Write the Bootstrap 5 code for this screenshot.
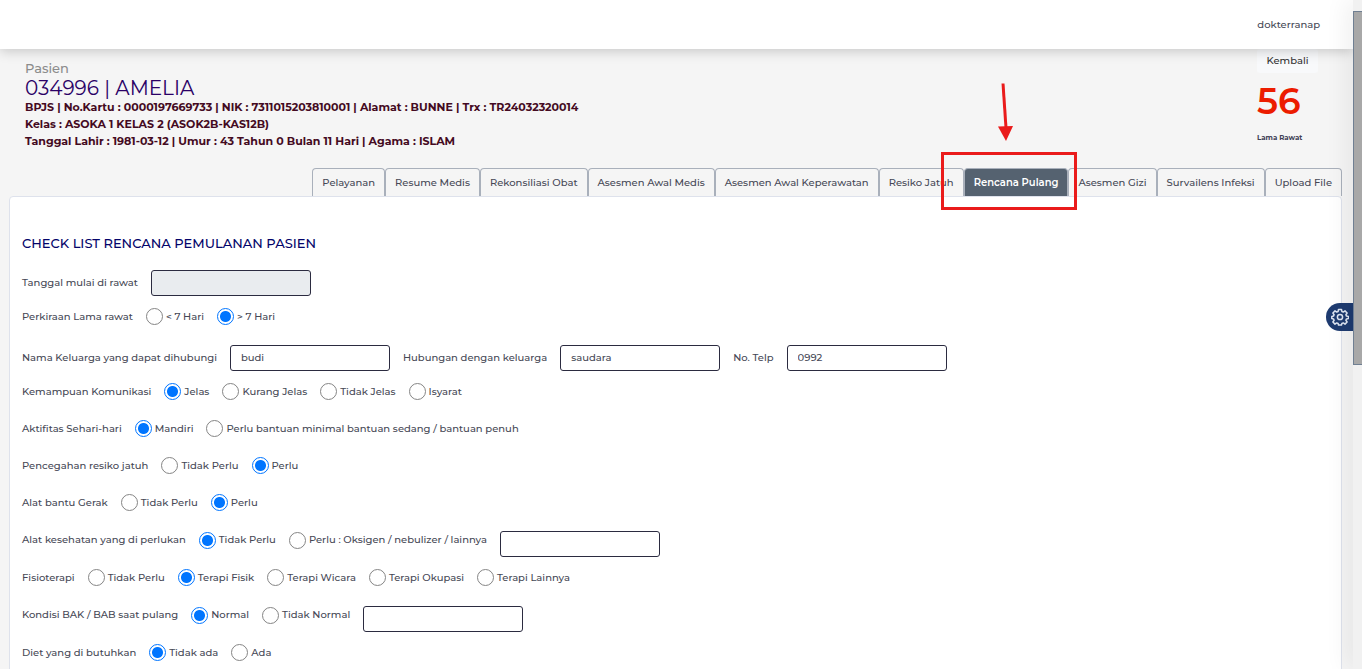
<!DOCTYPE html>
<html lang="id">
<head>
<meta charset="utf-8">
<meta name="viewport" content="width=device-width, initial-scale=1">
<title>Rencana Pulang</title>
<link href="https://cdn.jsdelivr.net/npm/bootstrap@5.3.0/dist/css/bootstrap.min.css" rel="stylesheet">
<style>
  body { font-family: Montserrat, Inter, "Noto Sans", sans-serif; font-size: 10px; font-weight: 500; line-height: 16px; color: #464855; background: #f5f5f5; }
  a { color: inherit; text-decoration: none; }
  .page { padding-right: 9px; }
  .topbar { height: 49px; box-shadow: 0 2px 12px rgba(0,0,0,.2); padding-right: 33px; position: relative; z-index: 2; }
  .patient { padding: 0 36px 0 25px; height: 119px; }
  .identity { padding-top: 11px; }
  .caption-text { font-size: 13px; line-height: 17px; font-weight: 500; color: #8c8c8c; }
  .patient h1 { font-size: 20px; line-height: 22px; font-weight: 400; color: #2a0066; margin: 0; }
  .patient p { font-size: 11px; line-height: 17px; font-weight: 700; color: #440a22; margin: 0; }
  .stay { width: 60px; }
  .btn-back { font-size: 10px; font-weight: 500; line-height: 16px; padding: 4px 0; background: #f8f9fb; color: #333; border: 0; border-radius: 3px; width: 61px; }
  .stay-count { font-size: 36px; line-height: 44px; font-weight: 600; color: #ec1c00; margin-top: 6px; }
  .stay-label { font-size: 7px; line-height: 16px; font-weight: 700; color: #404055; margin-top: 7px; white-space: nowrap; }
  .tabs { margin-right: 11px; }
  .tabs .nav-link { height: 28px; padding: 6px 9px; border: 1px solid #a9b0bb; border-bottom: 0; border-radius: 4px 4px 0 0; color: #464855; white-space: nowrap; }
  .tabs .nav-link.active { background: #556270; color: #fff; font-weight: 600; }
  .marker { position: absolute; z-index: 3; top: -16px; bottom: -14px; left: -23px; right: -9px; border: 3px solid #ea1b1b; }
  .marker-arrow { position: absolute; z-index: 3; bottom: 54px; left: 31px; }
  .panel { margin: 0 11px 0 9px; padding: 36px 12px 0; background: #fff; border: 1px solid #dee2ec; border-radius: 4px; height: 800px; }
  .panel h2 { font-size: 13px; line-height: 20px; font-weight: 500; color: #04046a; margin: 0 0 15px; }
  .line { height: 37px; gap: 13px; }
  .line-first { height: 30px; }
  .line-family { height: 31px; margin-top: 7px; }
  .line-extra { height: 38px; }
  .box { width: 160px; height: 26px; padding: 2px 10px; border: 1px solid #2b2b40; border-radius: 3px; font-size: 10px; font-weight: 500; color: #464855; }
  .box:disabled { background: #e9ecef; }
  .line-extra .box { align-self: flex-end; margin-bottom: 2px; }
  .choice { gap: 3px; }
  .choice input { appearance: none; width: 17px; height: 17px; margin: 0; border: 1px solid #858585; border-radius: 50%; background: #fff; }
  .choice input:checked { border-color: #0075ff; background: radial-gradient(circle, #0075ff 5px, #fff 6px); }
  .edge { position: fixed; z-index: 4; top: 0; bottom: 0; right: 0; width: 9px; background: #f1f1f1; box-shadow: 0 0 26px rgba(0,0,0,.16); }
  .thumb { position: absolute; top: 11px; width: 9px; height: 354px; background: #a8a8a8; border: 1px solid #6f7f92; border-right: 0; }
  .gear { position: fixed; z-index: 4; top: 303px; right: 9px; width: 27px; height: 28px; padding: 0 0 0 5px; border: 0; border-radius: 14px 0 0 14px; background: #1e3b70; }
</style>
</head>
<body>
<div class="page vh-100 overflow-hidden">
  <header class="topbar bg-white d-flex align-items-center justify-content-end"><a href="#">dokterranap</a></header>
  <section class="patient d-flex justify-content-between">
    <div class="identity">
      <div class="caption-text">Pasien</div>
      <h1>034996 | AMELIA</h1>
      <p>BPJS | No.Kartu : 0000197669733 | NIK : 7311015203810001 | Alamat : BUNNE | Trx : TR24032320014</p>
      <p>Kelas : ASOKA 1 KELAS 2 (ASOK2B-KAS12B)</p>
      <p>Tanggal Lahir : 1981-03-12 | Umur : 43 Tahun 0 Bulan 11 Hari | Agama : ISLAM</p>
    </div>
    <div class="stay">
      <button type="button" class="btn-back">Kembali</button>
      <div class="stay-count">56</div>
      <div class="stay-label">Lama Rawat</div>
    </div>
  </section>
  <ul class="tabs nav justify-content-end flex-nowrap">
    <li class="nav-item"><a class="nav-link" href="#">Pelayanan</a></li>
    <li class="nav-item"><a class="nav-link" href="#">Resume Medis</a></li>
    <li class="nav-item"><a class="nav-link" href="#">Rekonsiliasi Obat</a></li>
    <li class="nav-item"><a class="nav-link" href="#">Asesmen Awal Medis</a></li>
    <li class="nav-item"><a class="nav-link" href="#">Asesmen Awal Keperawatan</a></li>
    <li class="nav-item"><a class="nav-link" href="#">Resiko Jatuh</a></li>
    <li class="nav-item position-relative"><a class="nav-link active" href="#">Rencana Pulang</a>
      <span class="marker"></span>
      <svg class="marker-arrow" width="20" height="60" viewBox="0 0 20 60"><path d="M8 1.500L11 46" stroke="#ea1b1b" stroke-width="3"/><path d="M3 44.500L18 44L11 59Z" fill="#ea1b1b"/></svg>
    </li>
    <li class="nav-item"><a class="nav-link" href="#">Asesmen Gizi</a></li>
    <li class="nav-item"><a class="nav-link" href="#">Survailens Infeksi</a></li>
    <li class="nav-item"><a class="nav-link" href="#">Upload File</a></li>
  </ul>
  <form class="panel">
    <h2>CHECK LIST RENCANA PEMULANAN PASIEN</h2>
    <div class="line line-first d-flex align-items-center"><label for="mulai">Tanggal mulai di rawat</label><input class="box" id="mulai" type="text" disabled></div>
    <div class="line d-flex align-items-center"><span>Perkiraan Lama rawat</span>
      <label class="choice d-flex align-items-center"><input type="radio" name="lama">&lt; 7 Hari</label>
      <label class="choice d-flex align-items-center"><input type="radio" name="lama" checked>&gt; 7 Hari</label></div>
    <div class="line line-family d-flex align-items-center"><label for="nama">Nama Keluarga yang dapat dihubungi</label><input class="box" id="nama" type="text" value="budi">
      <label for="hub">Hubungan dengan keluarga</label><input class="box" id="hub" type="text" value="saudara">
      <label for="telp">No. Telp</label><input class="box" id="telp" type="text" value="0992"></div>
    <div class="line d-flex align-items-center"><span>Kemampuan Komunikasi</span>
      <label class="choice d-flex align-items-center"><input type="radio" name="kom" checked>Jelas</label>
      <label class="choice d-flex align-items-center"><input type="radio" name="kom">Kurang Jelas</label>
      <label class="choice d-flex align-items-center"><input type="radio" name="kom">Tidak Jelas</label>
      <label class="choice d-flex align-items-center"><input type="radio" name="kom">Isyarat</label></div>
    <div class="line d-flex align-items-center"><span>Aktifitas Sehari-hari</span>
      <label class="choice d-flex align-items-center"><input type="radio" name="akt" checked>Mandiri</label>
      <label class="choice d-flex align-items-center"><input type="radio" name="akt">Perlu bantuan minimal bantuan sedang / bantuan penuh</label></div>
    <div class="line d-flex align-items-center"><span>Pencegahan resiko jatuh</span>
      <label class="choice d-flex align-items-center"><input type="radio" name="jatuh">Tidak Perlu</label>
      <label class="choice d-flex align-items-center"><input type="radio" name="jatuh" checked>Perlu</label></div>
    <div class="line d-flex align-items-center"><span>Alat bantu Gerak</span>
      <label class="choice d-flex align-items-center"><input type="radio" name="gerak">Tidak Perlu</label>
      <label class="choice d-flex align-items-center"><input type="radio" name="gerak" checked>Perlu</label></div>
    <div class="line line-extra d-flex align-items-center"><span>Alat kesehatan yang di perlukan</span>
      <label class="choice d-flex align-items-center"><input type="radio" name="alat" checked>Tidak Perlu</label>
      <label class="choice d-flex align-items-center"><input type="radio" name="alat">Perlu : Oksigen / nebulizer / lainnya</label>
      <input class="box" type="text" aria-label="Alat kesehatan lainnya"></div>
    <div class="line d-flex align-items-center"><span>Fisioterapi</span>
      <label class="choice d-flex align-items-center"><input type="radio" name="fisio">Tidak Perlu</label>
      <label class="choice d-flex align-items-center"><input type="radio" name="fisio" checked>Terapi Fisik</label>
      <label class="choice d-flex align-items-center"><input type="radio" name="fisio">Terapi Wicara</label>
      <label class="choice d-flex align-items-center"><input type="radio" name="fisio">Terapi Okupasi</label>
      <label class="choice d-flex align-items-center"><input type="radio" name="fisio">Terapi Lainnya</label></div>
    <div class="line line-extra d-flex align-items-center"><span>Kondisi BAK / BAB saat pulang</span>
      <label class="choice d-flex align-items-center"><input type="radio" name="bak" checked>Normal</label>
      <label class="choice d-flex align-items-center"><input type="radio" name="bak">Tidak Normal</label>
      <input class="box" type="text" aria-label="Keterangan kondisi"></div>
    <div class="line d-flex align-items-center"><span>Diet yang di butuhkan</span>
      <label class="choice d-flex align-items-center"><input type="radio" name="diet" checked>Tidak ada</label>
      <label class="choice d-flex align-items-center"><input type="radio" name="diet">Ada</label></div>
  </form>
</div>
<button type="button" class="gear d-flex align-items-center" aria-label="Pengaturan">
  <svg width="18" height="18" viewBox="0 0 18 18" fill="none" stroke="#dfe6f2" stroke-width="1.500" stroke-linejoin="round"><circle cx="9" cy="9" r="2.600"/><path d="M7.500 1.500h3l.4 2 1.400.6 1.700-1.200 2.100 2.100-1.200 1.700.6 1.400 2 .4v2l-2 .4-.6 1.400 1.200 1.700-2.100 2.100-1.700-1.200-1.400.6-.4 1.500h-3l-.4-1.500-1.400-.6L4 16.100 1.900 14l1.200-1.700-.6-1.400-1.700-.4v-2l1.700-.4.6-1.400L1.900 5 4 2.900l1.700 1.200 1.400-.6z"/></svg>
</button>
<div class="edge"><div class="thumb"></div></div>
<script src="https://cdn.jsdelivr.net/npm/bootstrap@5.3.0/dist/js/bootstrap.bundle.min.js"></script>
</body>
</html>
